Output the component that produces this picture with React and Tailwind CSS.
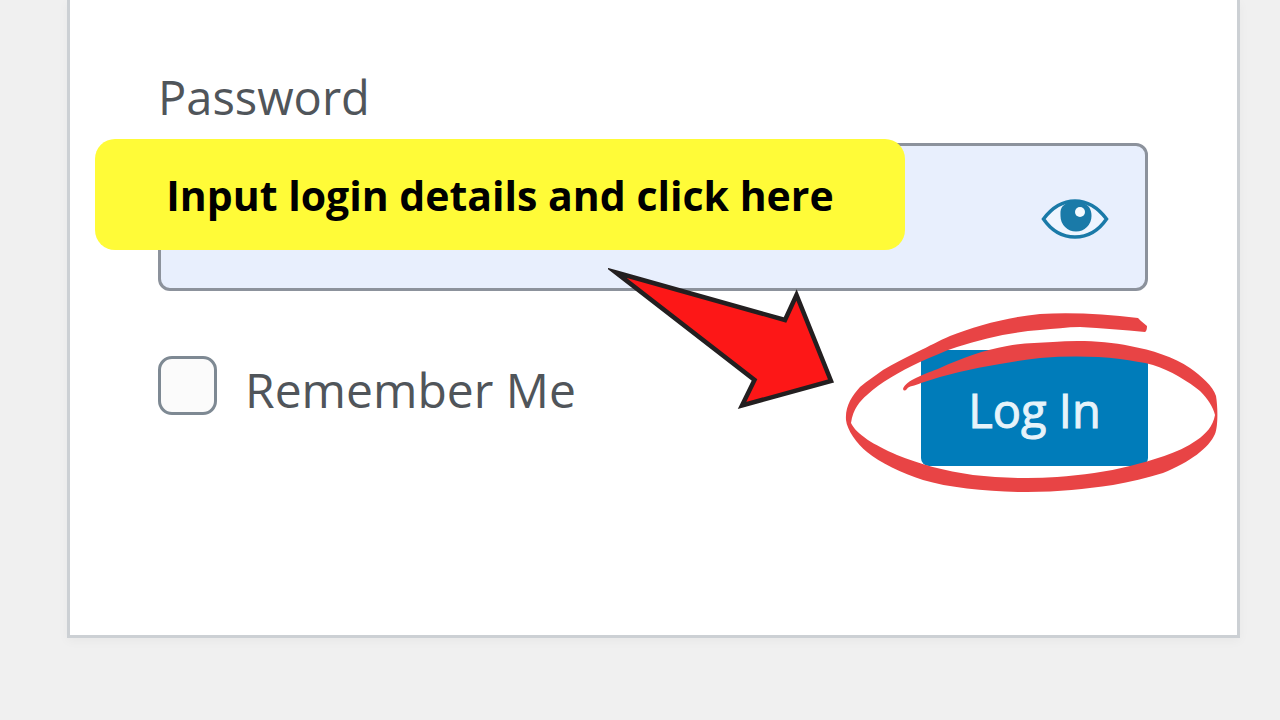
import React from 'react';

const EyeIcon = () => (
  <svg viewBox="0 0 68 44" className="w-[68px] h-11" aria-hidden="true">
    <path
      d="M2.500 22C10 12 20 4 34 4S58 12 65.500 22C58 33 48 40 34 40S10 33 2.500 22Z"
      fill="#eef5ff"
      stroke="#1a7aa8"
      strokeWidth="3.500"
    />
    <path
      d="M21 10C25 6 28 4 34 4s10 2 14 6c2 3 2.500 6 2.500 9a15.500 15.500 0 0 1-31 0c0-3-.5-6 1.500-9Z"
      fill="#1a7aa8"
    />
    <circle cx="39" cy="15" r="5" fill="#f4faff" />
  </svg>
);

const ArrowMark = () => (
  <svg
    viewBox="608 268 228 144"
    className="absolute left-[450px] top-[125px] w-[228px] h-36 z-10 pointer-events-none"
    aria-hidden="true"
  >
    <path
      d="M616 272.500 785 320 796.500 295 831 381 742 405.500 754.500 380Z"
      fill="#fd1717"
      stroke="#231f20"
      strokeWidth="4.500"
      strokeMiterlimit="12"
    />
  </svg>
);

const CircleMark = () => (
  <svg
    viewBox="842 308 380 188"
    className="absolute -left-[79px] -top-[42px] w-[380px] h-[188px] max-w-none pointer-events-none"
    aria-hidden="true"
  >
    <path
      d="M1138 318C1105 314 1071 312 1040 314C1008 317 975 326 950 336
        C938 341 930 346 917 352C905 358 893 364 883 370C876 375 867 381 860 387
        C852 396 845 406 846 420C847 430 857 444 867 452C880 463 902 473 923 480
        C950 488 990 492 1027 492C1060 492 1084 489 1113 485C1130 482 1147 478 1163 473
        C1190 462 1209 448 1215 434C1218 427 1218 408 1216 396
        C1213 386 1201 376 1190 368C1174 357 1152 350 1130 346
        C1107 341 1078 340 1053 342C1037 343 1022 343 1007 346
        C984 350 962 358 940 368C925 374 906 380 903 389Q904 392 907 389
        C908 386 915 386 921 383L940 377C973 368 1007 362 1040 358
        C1067 356 1094 356 1120 359C1132 361 1143 362 1153 365
        C1170 370 1189 382 1200 391C1208 399 1213 407 1215 415
        C1213 426 1206 434 1197 440C1177 454 1152 460 1130 466
        C1107 472 1082 475 1057 477C1030 479 1000 478 973 475
        C945 471 919 464 897 455C874 445 856 434 851 423
        C853 409 860 401 867 395C881 382 899 372 920 362
        C932 357 944 351 957 347C984 338 1012 332 1040 330
        C1054 329 1067 327 1080 327C1102 328 1124 330 1145 332Q1147 331 1147 326L1141 321Z"
      fill="#e84445"
    />
  </svg>
);

const PasswordField = () => (
  <div>
    <label htmlFor="password" className="block text-[47px] leading-[60px] text-[#50555a]">
      Password
    </label>
    <div className="relative mt-4">
      <input
        id="password"
        type="password"
        className="block w-full h-[148px] rounded-xl border-[3px] border-[#8c929c] bg-[#e8effd] pl-6 pr-28 text-5xl outline-none"
      />
      <button
        type="button"
        aria-label="Show password"
        className="absolute right-[39px] top-[54px]"
      >
        <EyeIcon />
      </button>
      <div className="absolute -left-[63px] -top-1 w-[810px] h-[111px] flex items-center justify-center rounded-[20px] bg-[#fffb38]">
        <p className="text-[41px] leading-[56px] font-bold text-black whitespace-nowrap">
          Input login details and click here
        </p>
      </div>
      <ArrowMark />
    </div>
  </div>
);

const App = () => {
  return (
    <main className="min-h-screen bg-[#f0f0f0] pl-[67px] pr-10 pb-[82px] overflow-hidden font-['Open_Sans',sans-serif]">
      <form
        onSubmit={(e) => e.preventDefault()}
        className="bg-white border-x-[3px] border-b-[3px] border-[#ccd0d4] shadow-[0_3px_10px_rgba(0,0,0,0.04)] pl-[88px] pr-[89px] pt-[67px] pb-[169px]"
      >
        <PasswordField />
        <div className="mt-[59px] flex items-start justify-between">
          <div className="flex items-start gap-7 pt-1.5">
            <input
              id="remember"
              type="checkbox"
              className="appearance-none size-[59px] shrink-0 rounded-[14px] border-[3px] border-[#7e8993] bg-[#fbfbfb]"
            />
            <label htmlFor="remember" className="text-[48px] leading-[68px] text-[#50555a]">
              Remember Me
            </label>
          </div>
          <div className="relative">
            <button
              type="submit"
              className="h-[116px] w-[227px] rounded-lg bg-[#007cba] pt-1 text-[47px] leading-[60px] text-[#e6f3fa] [-webkit-text-stroke:1px_#e6f3fa]"
            >
              Log In
            </button>
            <CircleMark />
          </div>
        </div>
      </form>
    </main>
  );
};

export default App;
